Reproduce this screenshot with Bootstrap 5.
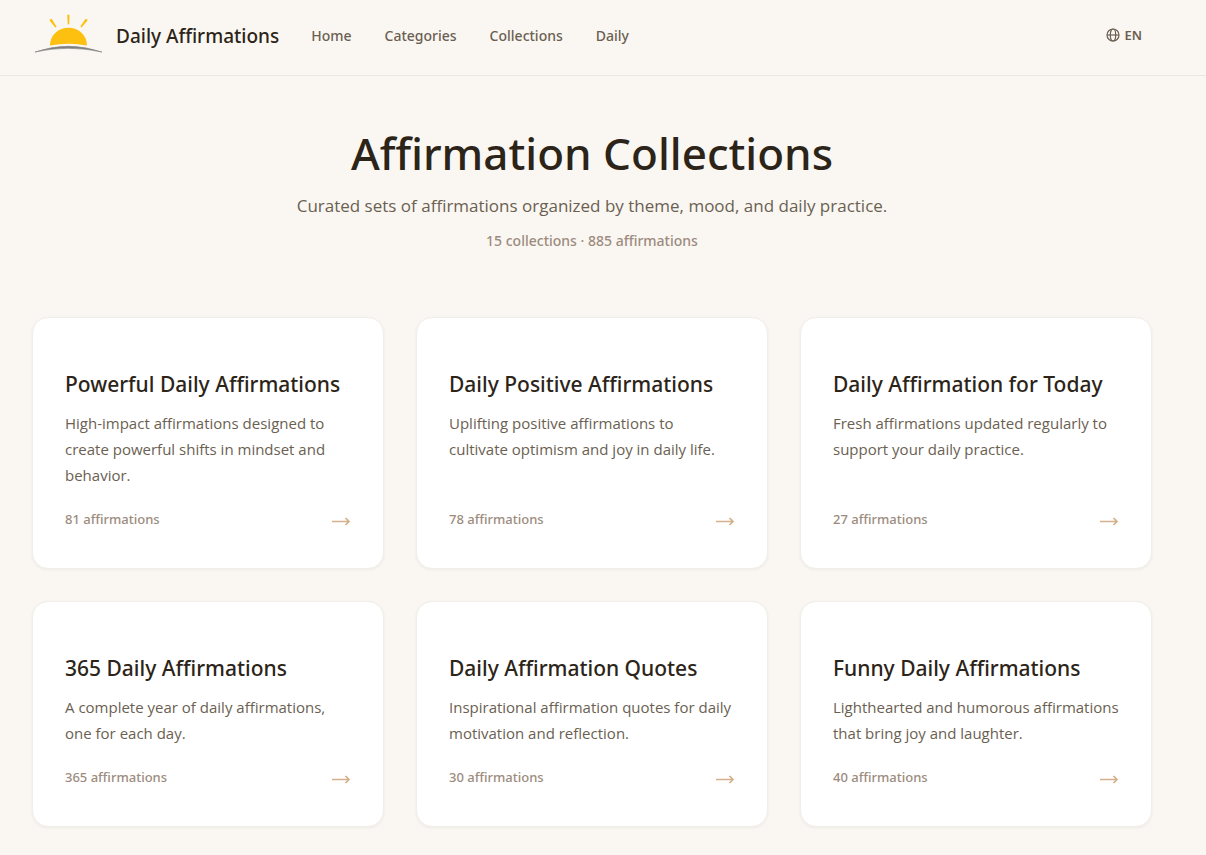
<!DOCTYPE html>
<html lang="en">
<head>
<meta charset="utf-8">
<meta name="viewport" content="width=device-width, initial-scale=1">
<title>Affirmation Collections</title>
<link href="https://cdn.jsdelivr.net/npm/bootstrap@5.3.0/dist/css/bootstrap.min.css" rel="stylesheet">
<style>
  :root {
    --ink: #2c2418;
    --ink-soft: #6b5f52;
    --ink-muted: #9c8b7e;
    --paper: #faf7f2;
    --accent: #d4b08c;
    --line: #ebe7e1;
  }
  body {
    background: var(--paper);
    color: var(--ink);
    font-family: "Noto Sans", "Open Sans", sans-serif;
  }
  .page-gutter { padding-left: 32px; padding-right: 54px; }
  .site-header { min-height: 76px; padding-bottom: 4px; border-bottom: 1px solid var(--line); }
  .site-brand { gap: 12px; color: var(--ink); font-size: 19px; font-weight: 500; line-height: 28px; }
  .site-links { gap: 33px; margin-left: 32px; }
  .site-links a { color: var(--ink-soft); font-size: 14px; font-weight: 500; line-height: 20px; }
  .lang-btn { gap: 4px; padding: 2px 10px 4px; color: var(--ink-soft); font-size: 13px; font-weight: 600; line-height: 20px; }
  .hero { padding-top: 47px; padding-bottom: 64px; }
  .hero-title { font-size: 44px; font-weight: 500; line-height: 60px; margin-bottom: 7px; }
  .hero-text { color: var(--ink-soft); font-family: "Open Sans", sans-serif; font-size: 17px; line-height: 32px; margin-bottom: 7px; }
  .hero-count { color: var(--ink-muted); font-size: 14px; font-weight: 500; line-height: 24px; margin-bottom: 0; }
  .collection-grid { --bs-gutter-x: 32px; --bs-gutter-y: 32px; }
  .collection-card {
    border: 1px solid #f0eeea;
    border-radius: 16px;
    padding: 52px 32px 36px;
    color: var(--ink);
    box-shadow: 0 1px 3px rgba(44, 36, 24, .06);
  }
  .collection-title { font-size: 21px; font-weight: 500; line-height: 28px; margin-bottom: 12px; }
  .collection-text { color: var(--ink-soft); font-family: "Open Sans", sans-serif; font-size: 15px; line-height: 26px; margin-bottom: 18px; }
  .collection-foot { color: var(--ink-muted); font-size: 13px; font-weight: 500; line-height: 26px; }
  .arrow { margin-top: 4px; color: var(--accent); }
</style>
</head>
<body>
<svg class="d-none" aria-hidden="true">
  <symbol id="arrow-right" viewBox="0 0 20 12">
    <path d="M1 6.500H17.500M14.500 3L18 6.500L14.500 10" fill="none" stroke="currentColor" stroke-width="1.700"/>
  </symbol>
</svg>

<header class="site-header page-gutter d-flex align-items-center">
  <nav class="d-flex align-items-center w-100" aria-label="Main">
    <a href="#" class="site-brand d-flex align-items-center text-decoration-none">
      <svg width="72" height="48" viewBox="0 -1 72 48" aria-hidden="true">
        <path d="M18 32.500C18 22 26.500 14.700 36.500 14.700S55 22 55 32.500Q36.500 29 18 32.500Z" fill="#fdc010"/>
        <path d="M3 39Q36 27.500 70 39Q36 31.500 3 39Z" fill="#808080" stroke="#808080" stroke-width=".6"/>
        <g fill="#fdc010">
          <path d="M35.200 2.200Q36.400 .8 37.500 2.200L37.200 11Q36.400 12 35.700 11Z"/>
          <path d="M17.600 7.500Q17.700 5.600 20 6.300L24.600 13.800Q23.600 15 22.800 14Z"/>
          <path d="M55.500 7.500Q55.400 5.600 53.200 6.300L48.400 13.600Q49 15 50 14Z"/>
        </g>
      </svg>
      <span>Daily Affirmations</span>
    </a>
    <div class="site-links d-flex">
      <a href="#" class="text-decoration-none">Home</a>
      <a href="#" class="text-decoration-none">Categories</a>
      <a href="#" class="text-decoration-none">Collections</a>
      <a href="#" class="text-decoration-none">Daily</a>
    </div>
    <button type="button" class="lang-btn btn border-0 d-flex align-items-center ms-auto">
      <svg width="14" height="14" viewBox="0 0 14 14" fill="none" stroke="currentColor" stroke-width="1.200" aria-hidden="true">
        <circle cx="7" cy="7" r="6"/>
        <ellipse cx="7" cy="7" rx="2.700" ry="6"/>
        <path d="M1 7H13"/>
      </svg>
      <span>EN</span>
    </button>
  </nav>
</header>

<main class="page-gutter pb-5">
  <section class="hero text-center">
    <h1 class="hero-title">Affirmation Collections</h1>
    <p class="hero-text">Curated sets of affirmations organized by theme, mood, and daily practice.</p>
    <p class="hero-count">15 collections · 885 affirmations</p>
  </section>

  <section class="collection-grid row row-cols-1 row-cols-md-2 row-cols-lg-3" aria-label="Collections">
    <div class="col">
      <a href="#" class="collection-card card h-100 text-decoration-none">
        <h2 class="collection-title">Powerful Daily Affirmations</h2>
        <p class="collection-text">High-impact affirmations designed to create powerful shifts in mindset and behavior.</p>
        <div class="collection-foot d-flex justify-content-between align-items-center mt-auto">
          <span>81 affirmations</span>
          <svg class="arrow" width="20" height="12" aria-hidden="true"><use href="#arrow-right"/></svg>
        </div>
      </a>
    </div>
    <div class="col">
      <a href="#" class="collection-card card h-100 text-decoration-none">
        <h2 class="collection-title">Daily Positive Affirmations</h2>
        <p class="collection-text">Uplifting positive affirmations to cultivate optimism and joy in daily life.</p>
        <div class="collection-foot d-flex justify-content-between align-items-center mt-auto">
          <span>78 affirmations</span>
          <svg class="arrow" width="20" height="12" aria-hidden="true"><use href="#arrow-right"/></svg>
        </div>
      </a>
    </div>
    <div class="col">
      <a href="#" class="collection-card card h-100 text-decoration-none">
        <h2 class="collection-title">Daily Affirmation for Today</h2>
        <p class="collection-text">Fresh affirmations updated regularly to support your daily practice.</p>
        <div class="collection-foot d-flex justify-content-between align-items-center mt-auto">
          <span>27 affirmations</span>
          <svg class="arrow" width="20" height="12" aria-hidden="true"><use href="#arrow-right"/></svg>
        </div>
      </a>
    </div>
    <div class="col">
      <a href="#" class="collection-card card h-100 text-decoration-none">
        <h2 class="collection-title">365 Daily Affirmations</h2>
        <p class="collection-text">A complete year of daily affirmations, one for each day.</p>
        <div class="collection-foot d-flex justify-content-between align-items-center mt-auto">
          <span>365 affirmations</span>
          <svg class="arrow" width="20" height="12" aria-hidden="true"><use href="#arrow-right"/></svg>
        </div>
      </a>
    </div>
    <div class="col">
      <a href="#" class="collection-card card h-100 text-decoration-none">
        <h2 class="collection-title">Daily Affirmation Quotes</h2>
        <p class="collection-text">Inspirational affirmation quotes for daily motivation and reflection.</p>
        <div class="collection-foot d-flex justify-content-between align-items-center mt-auto">
          <span>30 affirmations</span>
          <svg class="arrow" width="20" height="12" aria-hidden="true"><use href="#arrow-right"/></svg>
        </div>
      </a>
    </div>
    <div class="col">
      <a href="#" class="collection-card card h-100 text-decoration-none">
        <h2 class="collection-title">Funny Daily Affirmations</h2>
        <p class="collection-text">Lighthearted and humorous affirmations that bring joy and laughter.</p>
        <div class="collection-foot d-flex justify-content-between align-items-center mt-auto">
          <span>40 affirmations</span>
          <svg class="arrow" width="20" height="12" aria-hidden="true"><use href="#arrow-right"/></svg>
        </div>
      </a>
    </div>
  </section>
</main>
<script src="https://cdn.jsdelivr.net/npm/bootstrap@5.3.0/dist/js/bootstrap.bundle.min.js"></script>
</body>
</html>
